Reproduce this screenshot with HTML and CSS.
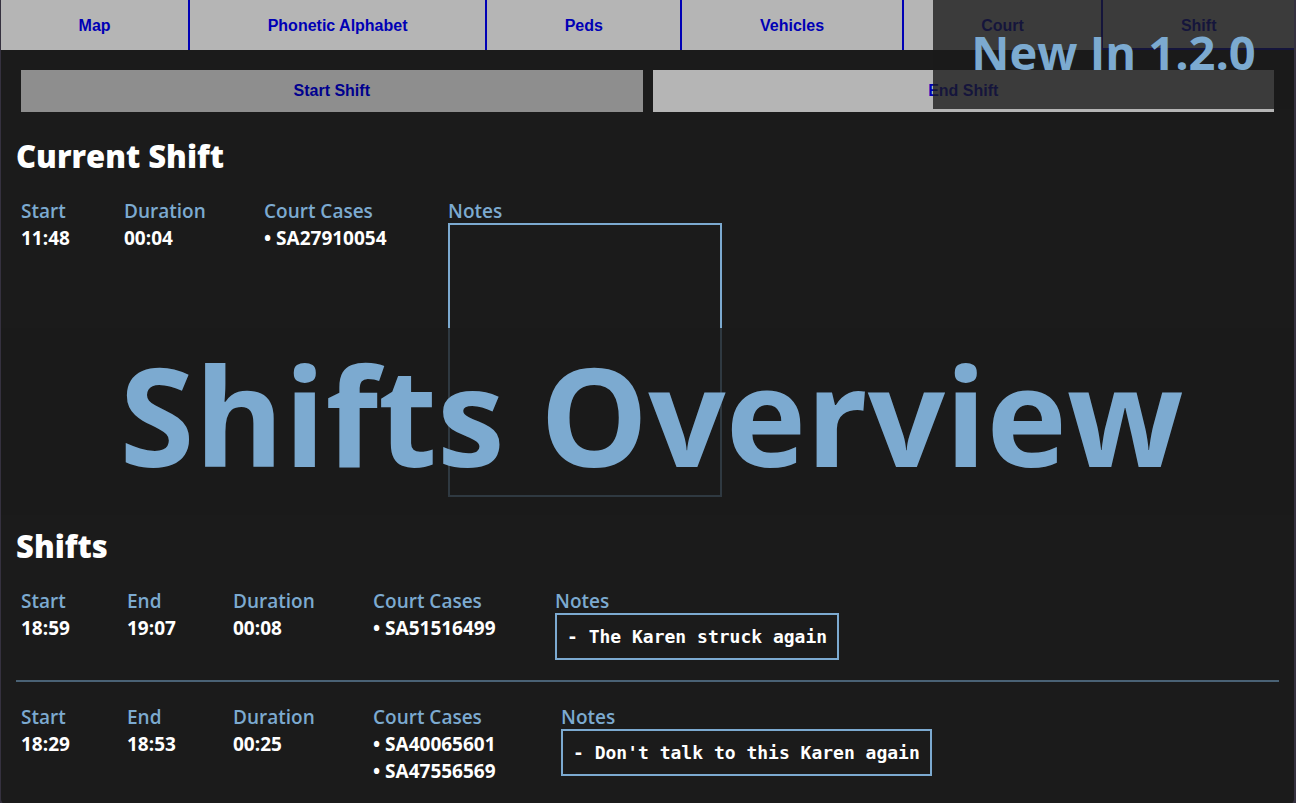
FILE: index.html
```html
<!DOCTYPE html>
<html lang="en">
<head>
<meta charset="utf-8">
<meta name="viewport" content="width=device-width, initial-scale=1">
<title>Shifts Overview</title>
<link rel="stylesheet" href="styles.css">
</head>
<body>
<div class="window">
  <nav class="tabs">
    <button class="tab" type="button">Map</button>
    <button class="tab" type="button">Phonetic Alphabet</button>
    <button class="tab" type="button">Peds</button>
    <button class="tab" type="button">Vehicles</button>
    <button class="tab" type="button">Court</button>
    <button class="tab tab-active" type="button">Shift</button>
  </nav>
  <main class="page">
    <div class="actions">
      <button class="action action-off" type="button">Start Shift</button>
      <button class="action" type="button">End Shift</button>
    </div>
    <section class="section">
      <h2 class="heading">Current Shift</h2>
      <div class="shift shift-current">
        <div class="field time-now"><span class="label">Start</span><span>11:48</span></div>
        <div class="field duration"><span class="label">Duration</span><span>00:04</span></div>
        <div class="field cases"><span class="label">Court Cases</span><span>• SA27910054</span></div>
        <div class="field"><label class="label" for="notes">Notes</label><textarea class="notes notes-input" id="notes"></textarea></div>
      </div>
    </section>
    <section class="section">
      <h2 class="heading">Shifts</h2>
      <div class="shift">
        <div class="field time"><span class="label">Start</span><span>18:59</span></div>
        <div class="field time"><span class="label">End</span><span>19:07</span></div>
        <div class="field duration"><span class="label">Duration</span><span>00:08</span></div>
        <div class="field cases"><span class="label">Court Cases</span><span>• SA51516499</span></div>
        <div class="field"><span class="label">Notes</span><pre class="notes">- The Karen struck again</pre></div>
      </div>
      <div class="shift">
        <div class="field time"><span class="label">Start</span><span>18:29</span></div>
        <div class="field time"><span class="label">End</span><span>18:53</span></div>
        <div class="field duration"><span class="label">Duration</span><span>00:25</span></div>
        <div class="field cases-wide"><span class="label">Court Cases</span><span>• SA40065601</span><span>• SA47556569</span></div>
        <div class="field"><span class="label">Notes</span><pre class="notes">- Don't talk to this Karen again</pre></div>
      </div>
    </section>
  </main>
  <div class="badge">New In 1.2.0</div>
  <div class="banner">Shifts Overview</div>
</div>
</body>
</html>
```
FILE: styles.css
```css
* { box-sizing: border-box; }

body {
  margin: 0;
  background: #35313f;
  color: #fff;
  font: 700 19px/27px "Open Sans", "Noto Sans", sans-serif;
}

.window {
  position: relative;
  min-height: 100vh;
  margin: 0 2px 0 1px;
  background: #1b1b1b;
  border-radius: 0 0 6px 6px;
  overflow: hidden;
}

.tabs { display: flex; height: 50px; }

.tab {
  flex: auto;
  padding: 2px 0 0;
  border: 0;
  border-right: 2px solid #0000b5;
  background: #b5b5b5;
  color: #0000b5;
  font: bold 16px "Liberation Sans", Arial, sans-serif;
}

.tab:last-child { border-right: 0; }
.tab-active { border-bottom: 2px solid #0000b5; padding-top: 4px; }

.page { padding: 20px 15px 0; }

.actions { display: flex; gap: 10px; padding: 0 5px; }

.action {
  flex: 1;
  height: 42px;
  padding: 0;
  border: 0;
  background: #b5b5b5;
  color: #0000b5;
  font: bold 16px "Liberation Sans", Arial, sans-serif;
}

.action-off { background: #8e8e8e; color: #00008e; }

.heading {
  margin: 0;
  padding: 22px 0 20px;
  font-family: "Open Sans", "Noto Sans", sans-serif;
  font-size: 31px;
  font-weight: 800;
  line-height: 44px;
}

.shift {
  display: flex;
  gap: 60px;
  padding: 0 5px 20px;
}

.shift-current { padding-bottom: 5px; }

.shift + .shift {
  border-top: 2px solid #4a6275;
  padding-top: 22px;
}

.field { display: flex; flex-direction: column; align-items: flex-start; white-space: nowrap; }
.label { color: #7caad0; font-weight: 600; }
.time-now { width: 43px; }
.time { width: 46px; }
.duration { width: 80px; }
.cases { width: 122px; }
.time-now ~ .cases { width: 124px; }
.cases-wide { width: 128px; }

.notes {
  margin: -2px 0 0;
  padding: 10px;
  border: 2px solid #7caad0;
  font: bold 18px/23px "DejaVu Sans Mono", monospace;
}

.notes-input {
  width: 274px;
  height: 274px;
  background: transparent;
  color: #fff;
  resize: none;
}

.badge,
.banner {
  position: absolute;
  right: 0;
  background: rgba(27, 27, 27, 0.79);
  color: #7caad0;
  font-weight: 700;
  text-align: center;
  white-space: nowrap;
}

.badge {
  top: 0;
  width: 361px;
  height: 109px;
  font-size: 47px;
  line-height: 105px;
}

.banner {
  top: 328px;
  left: 0;
  height: 187px;
  padding-left: 8px;
  font-size: 136px;
  line-height: 173px;
}
```
